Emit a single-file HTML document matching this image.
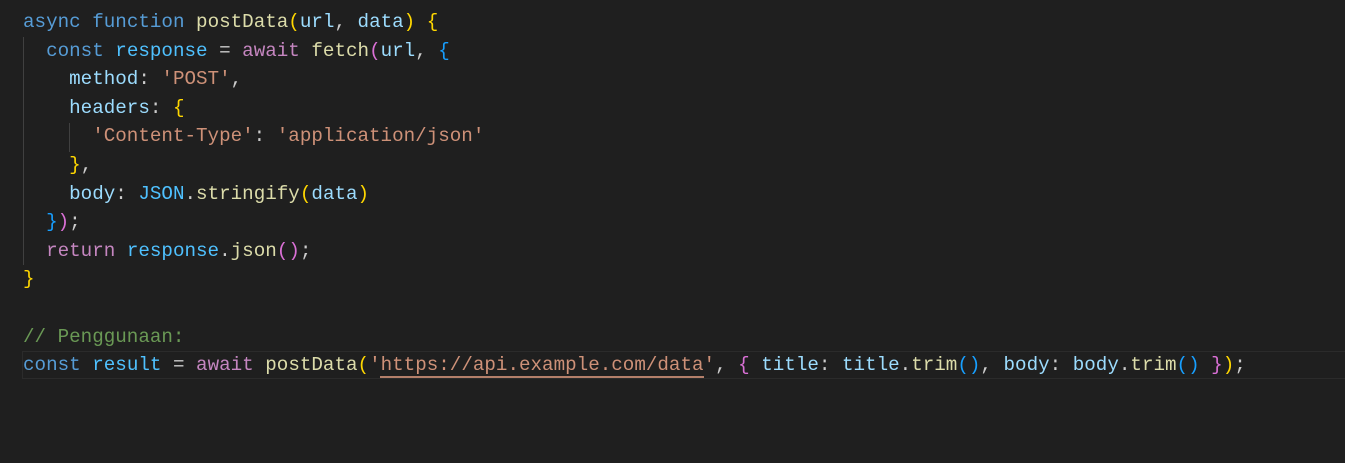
<!DOCTYPE html>
<html><head><meta charset="utf-8"><style>
html,body{margin:0;padding:0;background:#1f1f1f;width:1345px;height:463px;overflow:hidden}
.ed{position:absolute;left:0;top:0;width:1345px;height:463px;font-family:"Liberation Mono",monospace;font-size:19.23px;color:#cccccc}
.l{position:absolute;left:23px;height:28.6px;line-height:28.6px;white-space:pre}
.k{color:#569cd6}.v{color:#9cdcfe}.c{color:#4fc1ff}.f{color:#dcdcaa}.p{color:#c586c0}.s{color:#ce9178}.cm{color:#6a9955}
.b1{color:#ffd700}.b2{color:#da70d6}.b3{color:#179fff}
.g{position:absolute;width:1px;background:#404040}
.cur{position:absolute;left:22px;top:351px;width:1323px;height:26px;border:1px solid #2b2b2b;border-right:none}
.u{position:absolute;left:380px;top:376px;width:324px;height:2px;background:#ce9178;opacity:.85}
</style></head><body><div class="ed">
<div class="cur"></div>
<div class="g" style="left:23px;top:37px;height:228px"></div>
<div class="g" style="left:69px;top:123px;height:29px"></div>
<div class="l" style="top:8px"><span class="k">async</span> <span class="k">function</span> <span class="f">postData</span><span class="b1">(</span><span class="v">url</span>, <span class="v">data</span><span class="b1">)</span> <span class="b1">{</span></div>
<div class="l" style="top:36.6px">  <span class="k">const</span> <span class="c">response</span> = <span class="p">await</span> <span class="f">fetch</span><span class="b2">(</span><span class="v">url</span>, <span class="b3">{</span></div>
<div class="l" style="top:65.2px">    <span class="v">method</span>: <span class="s">'POST'</span>,</div>
<div class="l" style="top:93.8px">    <span class="v">headers</span>: <span class="b1">{</span></div>
<div class="l" style="top:122.4px">      <span class="s">'Content-Type'</span>: <span class="s">'application/json'</span></div>
<div class="l" style="top:151px">    <span class="b1">}</span>,</div>
<div class="l" style="top:179.6px">    <span class="v">body</span>: <span class="c">JSON</span>.<span class="f">stringify</span><span class="b1">(</span><span class="v">data</span><span class="b1">)</span></div>
<div class="l" style="top:208.2px">  <span class="b3">}</span><span class="b2">)</span>;</div>
<div class="l" style="top:236.8px">  <span class="p">return</span> <span class="c">response</span>.<span class="f">json</span><span class="b2">()</span>;</div>
<div class="l" style="top:265.4px"><span class="b1">}</span></div>
<div class="l" style="top:322.6px"><span class="cm">// Penggunaan:</span></div>
<div class="l" style="top:351.2px"><span class="k">const</span> <span class="c">result</span> = <span class="p">await</span> <span class="f">postData</span><span class="b1">(</span><span class="s">'https://api.example.com/data'</span>, <span class="b2">{</span> <span class="v">title</span>: <span class="v">title</span>.<span class="f">trim</span><span class="b3">()</span>, <span class="v">body</span>: <span class="v">body</span>.<span class="f">trim</span><span class="b3">()</span> <span class="b2">}</span><span class="b1">)</span>;</div>
<div class="u"></div>
</div></body></html>
